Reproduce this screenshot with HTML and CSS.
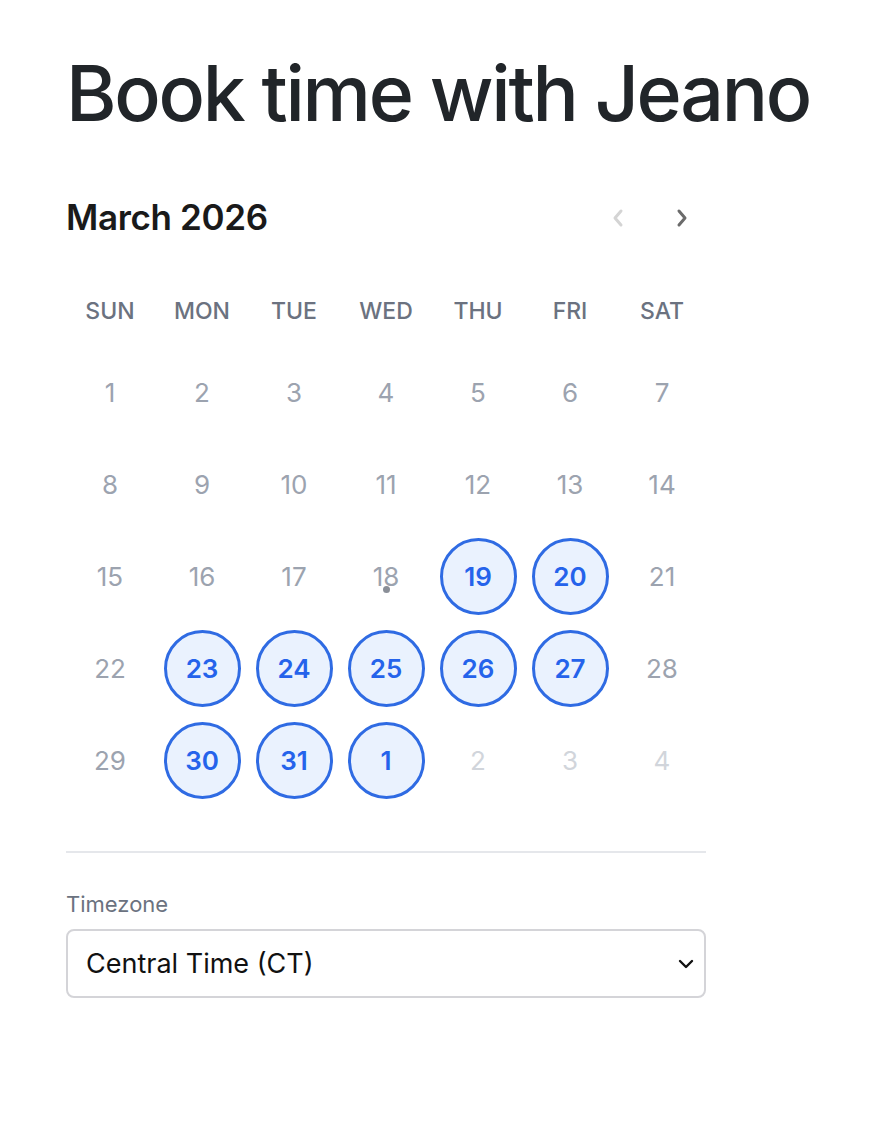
FILE: index.html
```html
<!DOCTYPE html>
<html lang="en">
<head>
  <meta charset="UTF-8">
  <meta name="viewport" content="width=device-width, initial-scale=1.0">
  <title>Book time with Jeano</title>
  <link rel="stylesheet" href="styles.css">
</head>
<body>
  <div class="booking">
    <h1 class="booking-title">Book time with Jeano</h1>

    <!-- Calendar -->
    <div class="calendar">
      <div class="calendar-header">
        <h2 class="calendar-month">March 2026</h2>
        <div class="calendar-nav">
          <button class="nav-btn disabled" aria-label="Previous month">
            <svg width="14" height="20" viewBox="0 0 14 20"><path d="M10 3 L4 10 L10 17" fill="none" stroke="currentColor" stroke-width="3" stroke-linecap="round" stroke-linejoin="round"/></svg>
          </button>
          <button class="nav-btn" aria-label="Next month">
            <svg width="14" height="20" viewBox="0 0 14 20"><path d="M4 3 L10 10 L4 17" fill="none" stroke="currentColor" stroke-width="3" stroke-linecap="round" stroke-linejoin="round"/></svg>
          </button>
        </div>
      </div>

      <div class="calendar-weekdays">
        <span>SUN</span><span>MON</span><span>TUE</span><span>WED</span><span>THU</span><span>FRI</span><span>SAT</span>
      </div>

      <div class="calendar-grid">
        <div class="day"><span>1</span></div>
        <div class="day"><span>2</span></div>
        <div class="day"><span>3</span></div>
        <div class="day"><span>4</span></div>
        <div class="day"><span>5</span></div>
        <div class="day"><span>6</span></div>
        <div class="day"><span>7</span></div>

        <div class="day"><span>8</span></div>
        <div class="day"><span>9</span></div>
        <div class="day"><span>10</span></div>
        <div class="day"><span>11</span></div>
        <div class="day"><span>12</span></div>
        <div class="day"><span>13</span></div>
        <div class="day"><span>14</span></div>

        <div class="day"><span>15</span></div>
        <div class="day"><span>16</span></div>
        <div class="day"><span>17</span></div>
        <div class="day today"><span>18</span></div>
        <div class="day available"><span>19</span></div>
        <div class="day available"><span>20</span></div>
        <div class="day"><span>21</span></div>

        <div class="day"><span>22</span></div>
        <div class="day available"><span>23</span></div>
        <div class="day available"><span>24</span></div>
        <div class="day available"><span>25</span></div>
        <div class="day available"><span>26</span></div>
        <div class="day available"><span>27</span></div>
        <div class="day"><span>28</span></div>

        <div class="day"><span>29</span></div>
        <div class="day available"><span>30</span></div>
        <div class="day available"><span>31</span></div>
        <div class="day available"><span>1</span></div>
        <div class="day outside"><span>2</span></div>
        <div class="day outside"><span>3</span></div>
        <div class="day outside"><span>4</span></div>
      </div>
    </div>

    <hr class="divider">

    <!-- Timezone -->
    <div class="timezone">
      <label class="timezone-label" for="tz">Timezone</label>
      <div class="select-wrap">
        <select id="tz" class="timezone-select">
          <option>Central Time (CT)</option>
          <option>Eastern Time (ET)</option>
          <option>Mountain Time (MT)</option>
          <option>Pacific Time (PT)</option>
        </select>
        <svg class="select-caret" width="16" height="10" viewBox="0 0 16 10"><path d="M2 2 L8 8 L14 2" fill="none" stroke="#111" stroke-width="2.4" stroke-linecap="round" stroke-linejoin="round"/></svg>
      </div>
    </div>
  </div>
</body>
</html>
```

FILE: styles.css
```css
body {
  font-family: Inter, "Noto Sans", sans-serif;
  margin: 0;
  padding: 0;
  background: #fff;
  color: #1f2328;
}

.booking {
  width: 640px;
  padding: 55px 0 0 66px;
}

.booking-title {
  font-size: 77px;
  font-weight: 500;
  line-height: 1;
  letter-spacing: -0.03em;
  white-space: nowrap;
  margin: 0;
  color: #212529;
}

/* Calendar */
.calendar-header {
  display: flex;
  justify-content: space-between;
  align-items: center;
  margin-top: 69px;
  height: 33px;
}
.calendar-month {
  font-size: 35px;
  font-weight: 600;
  line-height: 1;
  margin: 0;
  color: #1a1a1a;
  letter-spacing: -0.01em;
}
.calendar-nav {
  display: flex;
  gap: 50px;
  margin-right: 17px;
}
.nav-btn {
  border: none;
  background: none;
  padding: 0;
  width: 14px;
  height: 20px;
  color: #6b6b6b;
  cursor: pointer;
  display: flex;
}
.nav-btn.disabled {
  color: #d4d4d4;
  cursor: default;
}

.calendar-weekdays {
  display: grid;
  grid-template-columns: repeat(7, 92px);
  margin: 66px -2px 0;
  font-size: 23px;
  font-weight: 500;
  line-height: 1;
  color: #6b7280;
  text-align: center;
}

.calendar-grid {
  display: grid;
  grid-template-columns: repeat(7, 92px);
  grid-auto-rows: 92px;
  margin: 23px -2px 0;
}
.day {
  display: flex;
  align-items: center;
  justify-content: center;
  position: relative;
  font-size: 26px;
  color: #9ca3af;
}
.day span {
  width: 77px;
  height: 77px;
  box-sizing: border-box;
  display: flex;
  align-items: center;
  justify-content: center;
  border-radius: 50%;
}
.day.available span {
  background: #eaf2fe;
  border: 3px solid #2f6be3;
  color: #2563eb;
  font-weight: 600;
}
.day.outside {
  color: #d1d5db;
}
.day.today::after {
  content: "";
  position: absolute;
  left: 50%;
  top: 56px;
  width: 7px;
  height: 7px;
  margin-left: -3px;
  border-radius: 50%;
  background: #8a8f98;
}

.divider {
  border: none;
  border-top: 2px solid #e5e7eb;
  margin: 45px 0 0;
}

/* Timezone */
.timezone {
  margin-top: 38px;
}
.timezone-label {
  display: block;
  font-size: 22px;
  line-height: 1.2;
  color: #6b7280;
  margin-bottom: 12px;
}
.select-wrap {
  position: relative;
}
.timezone-select {
  appearance: none;
  -webkit-appearance: none;
  width: 100%;
  height: 69px;
  box-sizing: border-box;
  padding: 0 50px 0 18px;
  font-family: Inter, "Noto Sans", sans-serif;
  font-size: 27px;
  color: #111;
  background: #fff;
  border: 2px solid #d4d4d8;
  border-radius: 8px;
}
.select-caret {
  position: absolute;
  right: 12px;
  top: 30px;
  pointer-events: none;
}
```
